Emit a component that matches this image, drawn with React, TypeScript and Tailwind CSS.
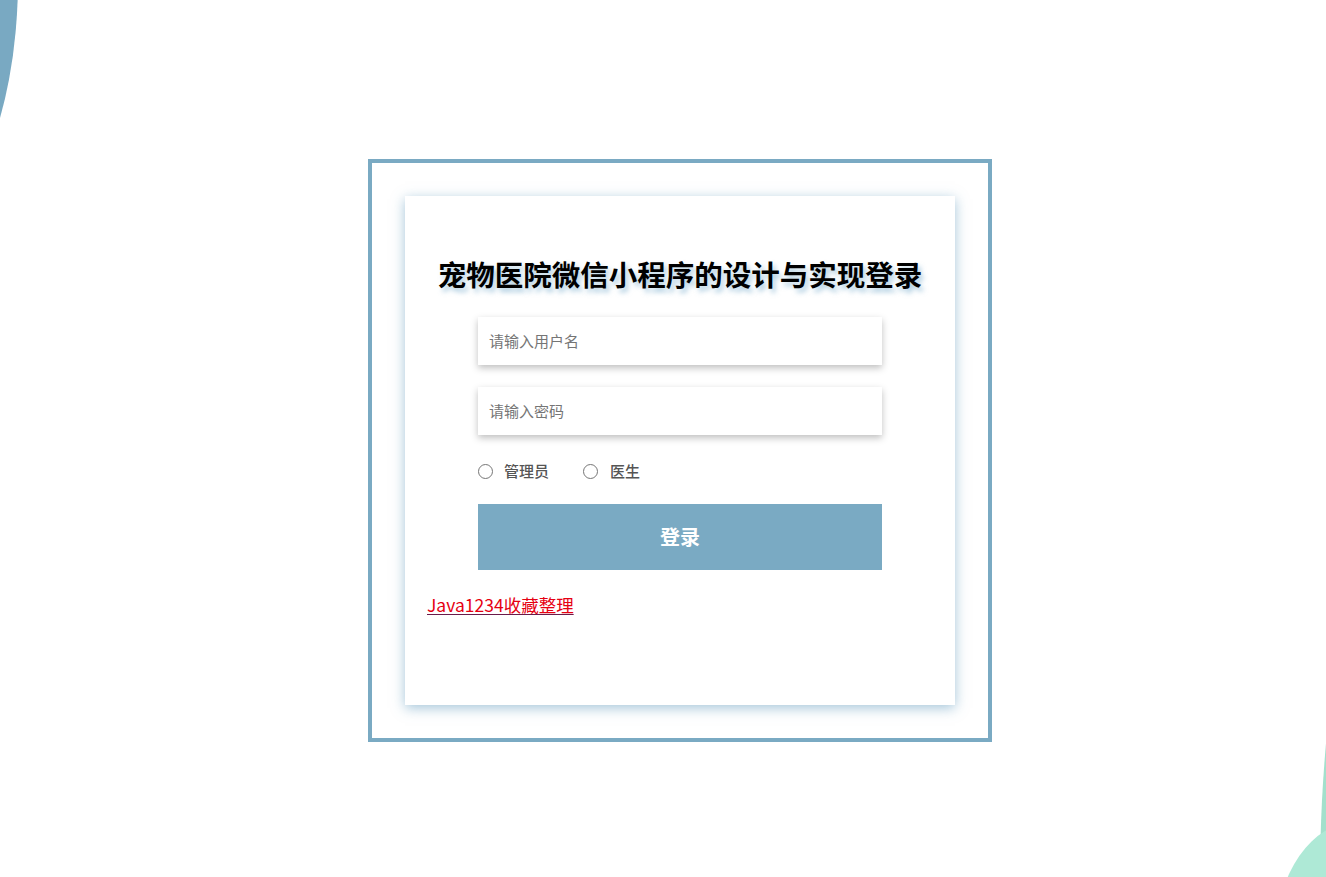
import React from "react";

export default function App() {
  const font = { fontFamily: '"Noto Sans CJK SC", "Noto Sans", sans-serif' };
  return (
    <div className="relative w-[1326px] h-[877px] overflow-hidden bg-white" style={font}>
      <svg className="absolute left-0 top-0" width="60" height="140" viewBox="0 0 60 140">
        <ellipse cx="-100" cy="-20" rx="118" ry="260" fill="#79a9c2" />
      </svg>
      <svg className="absolute right-0 bottom-0" width="80" height="140" viewBox="0 0 80 140">
        <ellipse cx="174" cy="143" rx="100" ry="400" fill="#a3e0cc" />
        <ellipse cx="110" cy="200" rx="80" ry="115" fill="#aee9d6" />
      </svg>

      <div className="pt-[159px] pl-[368px]">
        <div className="w-[624px] border-4 border-[#7aaac3] p-[33px]">
          <div className="w-[550px] h-[509px] bg-white shadow-[0_3px_12px_rgba(90,150,185,0.55)] pt-[57px]">
            <h1 className="text-center text-[28.5px] leading-[42px] font-bold text-black [text-shadow:3px_4px_5px_rgba(110,165,200,0.55)]">
              宠物医院微信小程序的设计与实现登录
            </h1>
            <div className="mt-[22px] flex flex-col items-center">
              <div className="w-[404px] h-[48px] bg-white shadow-[0_3px_7px_rgba(0,0,0,0.25)] flex items-center pl-[11px] text-[15px] text-[#757575]">
                请输入用户名
              </div>
              <div className="mt-[22px] w-[404px] h-[48px] bg-white shadow-[0_3px_7px_rgba(0,0,0,0.25)] flex items-center pl-[11px] text-[15px] text-[#757575]">
                请输入密码
              </div>
              <div className="mt-[26px] w-[404px] h-[20px] flex items-center text-[15px] font-medium text-[#555]">
                <span className="w-[15px] h-[15px] rounded-full border border-[#767676] bg-white" />
                <span className="ml-[11px]">管理员</span>
                <span className="ml-[34px] w-[15px] h-[15px] rounded-full border border-[#767676] bg-white" />
                <span className="ml-[12px]">医生</span>
              </div>
              <div className="mt-[23px] w-[404px] h-[66px] bg-[#7aaac3] flex items-center justify-center text-white text-[20px] font-bold">
                登录
              </div>
            </div>
            <div className="mt-[22px] pl-[22px] leading-[26px]">
              <a className="text-[17.5px] text-[#e60012] underline decoration-[#6a1b4a] underline-offset-2 cursor-pointer">
                Java1234收藏整理
              </a>
            </div>
          </div>
        </div>
      </div>
    </div>
  );
}
